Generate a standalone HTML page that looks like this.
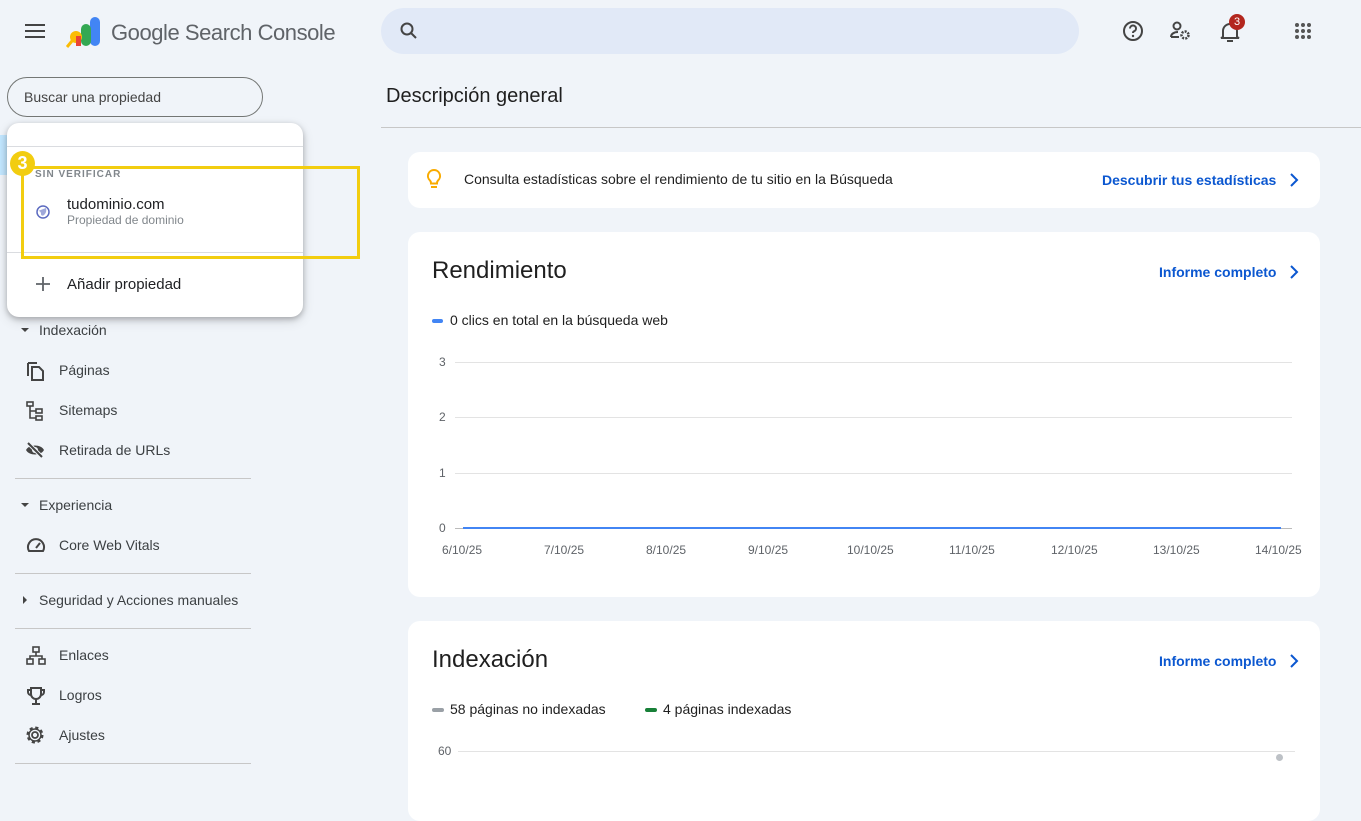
<!DOCTYPE html>
<html><head><meta charset="utf-8"><style>
*{box-sizing:border-box;margin:0;padding:0}
body{width:1361px;height:792px;overflow:hidden;background:#f0f4f9;font-family:"Liberation Sans",Arial,sans-serif;color:#1f1f1f;position:relative}
.a{position:absolute}
.t{font-size:14px;color:#1f1f1f;white-space:nowrap}
.nav{font-size:14px;color:#3c4043;white-space:nowrap}
.hr{position:absolute;height:1px;background:#c7c7c7}
.card{position:absolute;background:#fff;border-radius:12px}
.link{color:#0b57d0;font-size:14px;font-weight:bold;white-space:nowrap}
.gl{position:absolute;left:455px;width:837px;height:1px;background:#e3e3e3}
.yl{position:absolute;font-size:12px;color:#5f6368}
.xl{position:absolute;font-size:12px;color:#5f6368;top:543px}
</style></head><body>
<svg class="a" style="left:25px;top:24px" width="20" height="14"><rect y="0" width="20" height="2" fill="#444"/><rect y="6" width="20" height="2" fill="#444"/><rect y="12" width="20" height="2" fill="#444"/></svg>
<svg class="a" style="left:66px;top:16px" width="36" height="32">
<rect x="24" y="1" width="10" height="29" rx="5" fill="#4285f4"/>
<rect x="15" y="8" width="10" height="22" rx="5" fill="#34a853"/>
<circle cx="10" cy="21" r="6" fill="#fbbc04"/>
<rect x="10" y="20" width="5" height="10" fill="#ea4335"/>
<line x1="6" y1="25" x2="1" y2="31" stroke="#fbbc04" stroke-width="3"/>
</svg>
<div class="a" style="left:111px;top:20px;font-size:22px;color:#5f6368;white-space:nowrap;letter-spacing:-0.45px">Google Search Console</div>
<div class="a" style="left:381px;top:8px;width:698px;height:46px;border-radius:23px;background:#e1e9f7"></div>
<svg class="a" style="left:399px;top:21px" width="20" height="20"><circle cx="8" cy="8" r="5.5" fill="none" stroke="#444" stroke-width="2"/><line x1="12" y1="12" x2="17" y2="17" stroke="#444" stroke-width="2"/></svg>
<svg class="a" style="left:1121px;top:19px" width="24" height="24"><circle cx="12" cy="12" r="9" fill="none" stroke="#444" stroke-width="2"/><path d="M9 9.5a3 3 0 1 1 4 2.8c-.8.4-1 .9-1 1.7" fill="none" stroke="#444" stroke-width="2"/><circle cx="12" cy="17" r="1.2" fill="#444"/></svg>
<svg class="a" style="left:1169px;top:20px" width="24" height="22"><circle cx="8" cy="6" r="3.5" fill="none" stroke="#444" stroke-width="2"/><path d="M2 17c0-3 3-5 7-5" fill="none" stroke="#444" stroke-width="2"/><line x1="2" y1="17" x2="10" y2="17" stroke="#444" stroke-width="2"/><circle cx="16" cy="15" r="3.5" fill="none" stroke="#444" stroke-width="2.5" stroke-dasharray="2 1.2"/></svg>
<svg class="a" style="left:1218px;top:20px" width="24" height="24"><path d="M5 17V11a7 7 0 0 1 14 0v6l2 1H3z" fill="none" stroke="#444" stroke-width="2"/><line x1="9" y1="21" x2="15" y2="21" stroke="#444" stroke-width="2"/></svg>
<div class="a" style="left:1229px;top:14px;width:16px;height:16px;border-radius:8px;background:#b3261e;color:#fff;font-size:11px;text-align:center;line-height:16px">3</div>
<svg class="a" style="left:1294px;top:22px" width="18" height="18"><g fill="#555"><circle cx="3" cy="3" r="2"/><circle cx="9" cy="3" r="2"/><circle cx="15" cy="3" r="2"/><circle cx="3" cy="9" r="2"/><circle cx="9" cy="9" r="2"/><circle cx="15" cy="9" r="2"/><circle cx="3" cy="15" r="2"/><circle cx="9" cy="15" r="2"/><circle cx="15" cy="15" r="2"/></g></svg>

<div class="a" style="left:7px;top:77px;width:256px;height:40px;border:1px solid #747775;border-radius:20px"></div>
<div class="a t" style="left:24px;top:89px;color:#444">Buscar una propiedad</div>
<div class="a" style="left:0;top:135px;width:10px;height:40px;background:#c2e7ff"></div>

<div class="a" style="left:21px;top:328px;border-left:4px solid transparent;border-right:4px solid transparent;border-top:4px solid #444"></div>
<div class="a nav" style="left:39px;top:322px">Indexación</div>
<svg class="a" style="left:26px;top:361px" width="18" height="20"><path d="M2 2v13M2 2h9" stroke="#444" stroke-width="2" fill="none"/><path d="M6 6h7l4 4v9H6z" stroke="#444" stroke-width="2" fill="none"/></svg>
<div class="a nav" style="left:59px;top:362px">Páginas</div>
<svg class="a" style="left:26px;top:401px" width="18" height="20"><g stroke="#444" stroke-width="1.6" fill="none"><rect x="1" y="1" width="6" height="4"/><rect x="10" y="8" width="6" height="4"/><rect x="10" y="15" width="6" height="4"/><path d="M4 5v12h6M4 10h6"/></g></svg>
<div class="a nav" style="left:59px;top:402px">Sitemaps</div>
<svg class="a" style="left:25px;top:441px" width="20" height="18"><path d="M1 9c3-6 15-6 18 0-3 6-15 6-18 0z" fill="#444"/><circle cx="10" cy="9" r="3" fill="#f0f4f9"/><line x1="3" y1="2" x2="17" y2="16" stroke="#f0f4f9" stroke-width="4"/><line x1="3" y1="2" x2="17" y2="16" stroke="#444" stroke-width="2"/></svg>
<div class="a nav" style="left:59px;top:442px">Retirada de URLs</div>
<div class="hr" style="left:15px;top:478px;width:236px"></div>
<div class="a" style="left:21px;top:503px;border-left:4px solid transparent;border-right:4px solid transparent;border-top:4px solid #444"></div>
<div class="a nav" style="left:39px;top:497px">Experiencia</div>
<svg class="a" style="left:26px;top:537px" width="20" height="16"><path d="M3 14a8 8 0 1 1 14 0z" fill="none" stroke="#444" stroke-width="2"/><line x1="10" y1="11" x2="14" y2="6" stroke="#444" stroke-width="2"/></svg>
<div class="a nav" style="left:59px;top:537px">Core Web Vitals</div>
<div class="hr" style="left:15px;top:573px;width:236px"></div>
<div class="a" style="left:23px;top:596px;border-top:4px solid transparent;border-bottom:4px solid transparent;border-left:4px solid #444"></div>
<div class="a nav" style="left:39px;top:592px">Seguridad y Acciones manuales</div>
<div class="hr" style="left:15px;top:628px;width:236px"></div>
<svg class="a" style="left:26px;top:646px" width="20" height="20"><g stroke="#444" stroke-width="1.6" fill="none"><rect x="7" y="1" width="6" height="5"/><rect x="1" y="13" width="6" height="5"/><rect x="13" y="13" width="6" height="5"/><path d="M10 6v4M4 13v-3h12v3"/></g></svg>
<div class="a nav" style="left:59px;top:647px">Enlaces</div>
<svg class="a" style="left:26px;top:686px" width="20" height="20"><g stroke="#444" stroke-width="2" fill="none"><path d="M5 2h10v6a5 5 0 0 1-10 0z"/><path d="M5 4H2v2a3 3 0 0 0 3 3M15 4h3v2a3 3 0 0 1-3 3M10 13v4M6 18h8"/></g></svg>
<div class="a nav" style="left:59px;top:687px">Logros</div>
<svg class="a" style="left:25px;top:725px" width="20" height="20"><circle cx="10" cy="10" r="3" fill="none" stroke="#444" stroke-width="1.8"/><circle cx="10" cy="10" r="7" fill="none" stroke="#444" stroke-width="3" stroke-dasharray="3 2.5"/><circle cx="10" cy="10" r="6" fill="none" stroke="#444" stroke-width="1.5"/></svg>
<div class="a nav" style="left:59px;top:727px">Ajustes</div>
<div class="hr" style="left:15px;top:763px;width:236px"></div>

<div class="a" style="left:7px;top:123px;width:296px;height:194px;background:#fff;border-radius:12px;box-shadow:0 2px 6px rgba(0,0,0,.25),0 4px 12px rgba(0,0,0,.12)"></div>
<div class="hr" style="left:7px;top:146px;width:296px;background:#dadce0"></div>
<div class="a" style="left:35px;top:169px;font-size:10px;color:#80868b;letter-spacing:1px;font-weight:bold">SIN VERIFICAR</div>
<svg class="a" style="left:36px;top:205px" width="14" height="14"><circle cx="7" cy="7" r="6" fill="#fff" stroke="#5c6bc0" stroke-width="1.5"/><path d="M2 6c2 0 3 1 3 3s2 2 3 1 3-3 2-7" fill="#9fa8da"/></svg>
<div class="a" style="left:67px;top:196px;font-size:15px;color:#202124">tudominio.com</div>
<div class="a" style="left:67px;top:213px;font-size:12px;color:#80868b">Propiedad de dominio</div>
<div class="hr" style="left:7px;top:252px;width:296px;background:#dadce0"></div>
<svg class="a" style="left:36px;top:277px" width="14" height="14"><path d="M7 0v14M0 7h14" stroke="#5f6368" stroke-width="1.8"/></svg>
<div class="a" style="left:67px;top:276px;font-size:15px;color:#202124">Añadir propiedad</div>
<div class="a" style="left:21px;top:166px;width:339px;height:93px;border:3px solid #f2cd10"></div>
<div class="a" style="left:10px;top:151px;width:25px;height:25px;border-radius:13px;background:#f2cd10;color:#fff;font-weight:bold;font-size:18px;text-align:center;line-height:25px">3</div>

<div class="a" style="left:386px;top:85px;font-size:20px;color:#1f1f1f">Descripción general</div>
<div class="hr" style="left:381px;top:127px;width:980px"></div>

<div class="card" style="left:408px;top:152px;width:912px;height:56px"></div>
<svg class="a" style="left:426px;top:169px" width="16" height="22"><path d="M8 1a6 6 0 0 0-4 10.5c1 1 1 2 1 3h6c0-1 0-2 1-3A6 6 0 0 0 8 1z" fill="none" stroke="#f9ab00" stroke-width="2"/><rect x="5" y="17" width="6" height="2" fill="#f9ab00"/></svg>
<div class="a t" style="left:464px;top:171px;color:#1f1f1f">Consulta estadísticas sobre el rendimiento de tu sitio en la Búsqueda</div>
<div class="a link" style="left:1102px;top:172px">Descubrir tus estadísticas</div>
<svg class="a" style="left:1289px;top:173px" width="10" height="14"><path d="M2 1l6 6-6 6" fill="none" stroke="#0b57d0" stroke-width="2"/></svg>

<div class="card" style="left:408px;top:232px;width:912px;height:365px"></div>
<div class="a" style="left:432px;top:257px;font-size:24px;color:#1f1f1f">Rendimiento</div>
<div class="a link" style="left:1159px;top:264px">Informe completo</div>
<svg class="a" style="left:1289px;top:265px" width="10" height="14"><path d="M2 1l6 6-6 6" fill="none" stroke="#0b57d0" stroke-width="2"/></svg>
<div class="a" style="left:432px;top:319px;width:11px;height:4px;border-radius:2px;background:#4285f4"></div>
<div class="a t" style="left:450px;top:312px">0 clics en total en la búsqueda web</div>
<div class="yl" style="left:439px;top:355px">3</div><div class="gl" style="top:362px"></div>
<div class="yl" style="left:439px;top:410px">2</div><div class="gl" style="top:417px"></div>
<div class="yl" style="left:439px;top:466px">1</div><div class="gl" style="top:473px"></div>
<div class="yl" style="left:439px;top:521px">0</div><div class="gl" style="top:528px;background:#bbb"></div>
<div class="a" style="left:463px;top:527px;width:818px;height:2px;background:#4285f4"></div>
<div class="xl" style="left:442px">6/10/25</div>
<div class="xl" style="left:544px">7/10/25</div>
<div class="xl" style="left:646px">8/10/25</div>
<div class="xl" style="left:748px">9/10/25</div>
<div class="xl" style="left:847px">10/10/25</div>
<div class="xl" style="left:949px">11/10/25</div>
<div class="xl" style="left:1051px">12/10/25</div>
<div class="xl" style="left:1153px">13/10/25</div>
<div class="xl" style="left:1255px">14/10/25</div>

<div class="card" style="left:408px;top:621px;width:912px;height:200px"></div>
<div class="a" style="left:432px;top:646px;font-size:24px;color:#1f1f1f">Indexación</div>
<div class="a link" style="left:1159px;top:653px">Informe completo</div>
<svg class="a" style="left:1289px;top:654px" width="10" height="14"><path d="M2 1l6 6-6 6" fill="none" stroke="#0b57d0" stroke-width="2"/></svg>
<div class="a" style="left:432px;top:708px;width:12px;height:4px;border-radius:2px;background:#9aa0a6"></div>
<div class="a t" style="left:450px;top:701px">58 páginas no indexadas</div>
<div class="a" style="left:645px;top:708px;width:12px;height:4px;border-radius:2px;background:#188038"></div>
<div class="a t" style="left:663px;top:701px">4 páginas indexadas</div>
<div class="yl" style="left:438px;top:744px">60</div><div class="gl" style="top:751px;left:458px"></div>
<div class="a" style="left:1276px;top:754px;width:7px;height:7px;border-radius:4px;background:#bdc1c6"></div>
</body></html>
